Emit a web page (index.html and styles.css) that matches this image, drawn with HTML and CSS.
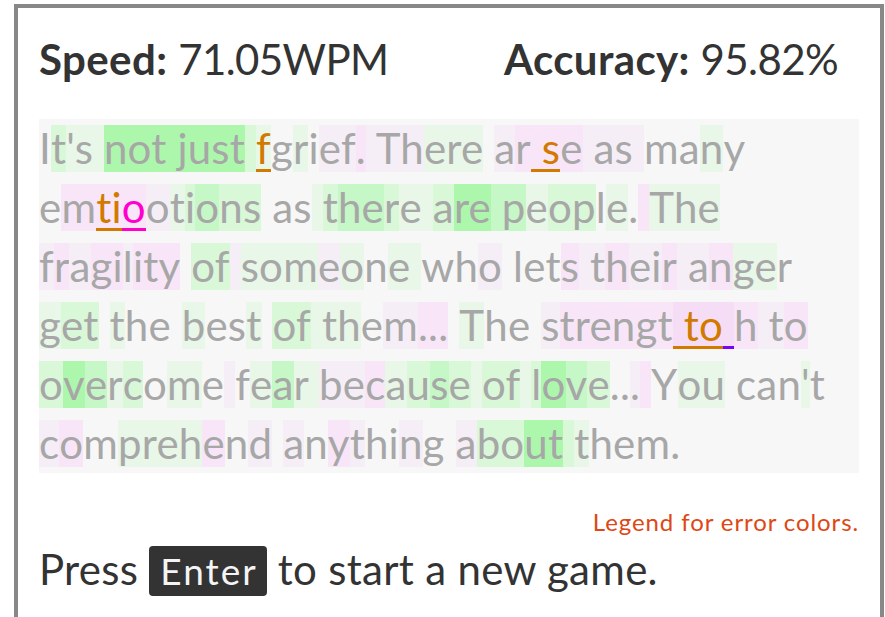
FILE: index.html
```html
<!DOCTYPE html>
<html lang="en">
<head>
<meta charset="utf-8">
<title>Typing results</title>
<link rel="stylesheet" href="styles.css">
</head>
<body>
<div class="panel">
  <div class="stats">
    <div class="stat"><b>Speed:</b> <span class="val">71.05WPM</span></div>
    <div class="stat"><b>Accuracy:</b> <span class="val">95.82%</span></div>
  </div>
  <div class="passage">
    <div class="line"><span>I</span><span class="g2">t</span><span class="g1">'s </span><span class="g4">not just</span><span class="g2"> </span><span class="g1 eo">f</span><span>g</span><span class="g1">r</span><span>i</span><span class="p1">ef</span><span class="p2">.</span><span class="p1"> Th</span><span class="g1">ere</span><span> </span><span class="p1">a</span><span class="p2">r</span><span class="p2 eo"> s</span><span class="p2">e</span><span class="p1"> as </span><span>ma</span><span class="g1">n</span><span>y</span></div>
    <div class="line"><span>e</span><span class="p2">m</span><span class="p2 eo">ti</span><span class="p2 em">o</span><span class="p1">o</span><span class="g1">t</span><span class="g2">i</span><span class="g3">o</span><span class="g2">ns</span><span> as</span><span class="g1"> </span><span class="g2">t</span><span class="g3">he</span><span class="g2">r</span><span class="g1">e </span><span class="g2">a</span><span class="g4">re</span><span class="g3"> p</span><span class="g1">e</span><span class="g2">op</span><span>l</span><span class="g1">e</span><span>.</span><span class="p2"> </span><span class="g1">The</span></div>
    <div class="line"><span class="p1">f</span><span class="p2">r</span><span class="p1">a</span><span class="p2">gi</span><span class="p1">l</span><span class="p2">ity</span><span> </span><span class="g2">of</span><span class="p1"> </span><span class="g1">som</span><span class="p1">e</span><span class="g1">o</span><span>n</span><span class="g1">e </span><span>wh</span><span class="p1">o</span><span> let</span><span class="p2">s</span><span class="p1"> t</span><span class="p2">h</span><span class="p1">ei</span><span class="p2">r</span><span class="p1"> a</span><span class="p2">n</span><span class="g1">ge</span><span>r</span></div>
    <div class="line"><span class="g1">g</span><span class="g2">et</span><span> </span><span class="g1">t</span><span>he </span><span class="g1">b</span><span>es</span><span class="g1">t</span><span> </span><span class="g2">of</span><span class="g1"> th</span><span>e</span><span class="p1">m</span><span class="p2">...</span><span> </span><span class="g1">T</span><span>he </span><span class="p1">s</span><span class="p2">trengt</span><span class="p3 eo"> to</span><span class="p3 ev"> </span><span class="p2">h</span><span class="p1"> t</span><span class="p2">o</span></div>
    <div class="line"><span class="g2">o</span><span class="g4">v</span><span class="g3">e</span><span class="g1">r</span><span class="g2">c</span><span>o</span><span class="g1">m</span><span>e</span><span class="p1"> </span><span>f</span><span class="g1">e</span><span class="g3">a</span><span class="g1">r </span><span class="p1">be</span><span class="p2">c</span><span class="g1">a</span><span class="g2">u</span><span class="g3">s</span><span class="g2">e</span><span class="g1"> </span><span class="g2">of</span><span class="g1"> </span><span class="g2">l</span><span class="g4">o</span><span class="g3">v</span><span class="g2">e</span><span>..</span><span class="p1">.</span><span class="p2"> </span><span>Y</span><span class="g1">ou</span><span> can</span><span class="g1">'</span><span>t</span></div>
    <div class="line"><span class="p1">c</span><span class="p2">o</span><span>m</span><span class="g1">preh</span><span class="p2">e</span><span>n</span><span class="p1">d</span><span> </span><span class="p1">a</span><span>n</span><span class="p2">y</span><span class="p1">t</span><span>hi</span><span class="p1">n</span><span>g </span><span class="p1">a</span><span class="g2">bo</span><span class="g4">ut</span><span class="g2"> </span><span class="g1">t</span><span>hem.</span></div>
  </div>
  <div class="legend">Legend for error colors.</div>
  <p class="restart">Press <kbd class="key">Enter</kbd> to start a new game.</p>
</div>
</body>
</html>
```

FILE: styles.css
```css
html, body {
  margin: 0;
  padding: 0;
  background: #ffffff;
}

body {
  font-family: Lato, "Open Sans", sans-serif;
  color: #333333;
}

.panel {
  box-sizing: border-box;
  width: 870px;
  margin: 4px 0 0 14px;
  border: 4px solid #888888;
  padding: 26px 21px 40px 21px;
}

.stats {
  display: flex;
  justify-content: space-between;
  padding-right: 21px;
  font-size: 42px;
  line-height: 50px;
}

.stat b {
  font-weight: 700;
  letter-spacing: 0.4px;
}

.stat .val {
  letter-spacing: -0.6px;
}

.passage {
  margin-top: 35px;
  background: #f7f7f7;
  color: #a7a7a7;
  font-size: 42px;
  letter-spacing: 0.2px;
}

.line {
  display: flex;
  align-items: center;
  height: 59px;
  white-space: pre;
}

.line span {
  line-height: 47px;
}

.g1 { background: #e8f7e8; }
.g2 { background: #d8f8d8; }
.g3 { background: #c6f7c6; }
.g4 { background: #adf7ad; }
.p1 { background: #f6eef7; }
.p2 { background: #f8e6f8; }
.p3 { background: #f6ddf6; }

.eo {
  color: #d27a00;
  box-shadow: inset 0 -3px 0 #d27a00;
}

.em {
  color: #ff00cc;
  box-shadow: inset 0 -3px 0 #ff00cc;
}

.ev {
  box-shadow: inset 0 -3px 0 #7a00ff;
}

.legend {
  margin-top: 37px;
  text-align: right;
  font-size: 24px;
  line-height: 24px;
  letter-spacing: 0.9px;
  color: #dd4814;
}

.restart {
  margin: 10px 0 0 0;
  font-size: 42px;
  line-height: 50px;
  letter-spacing: 0.3px;
}

.key {
  display: inline-block;
  font-family: Lato, "Open Sans", sans-serif;
  font-size: 37px;
  line-height: 50px;
  letter-spacing: 2px;
  padding: 0 9px 0 11px;
  background: #333333;
  color: #f4f4f4;
  border-radius: 4px;
}
```
